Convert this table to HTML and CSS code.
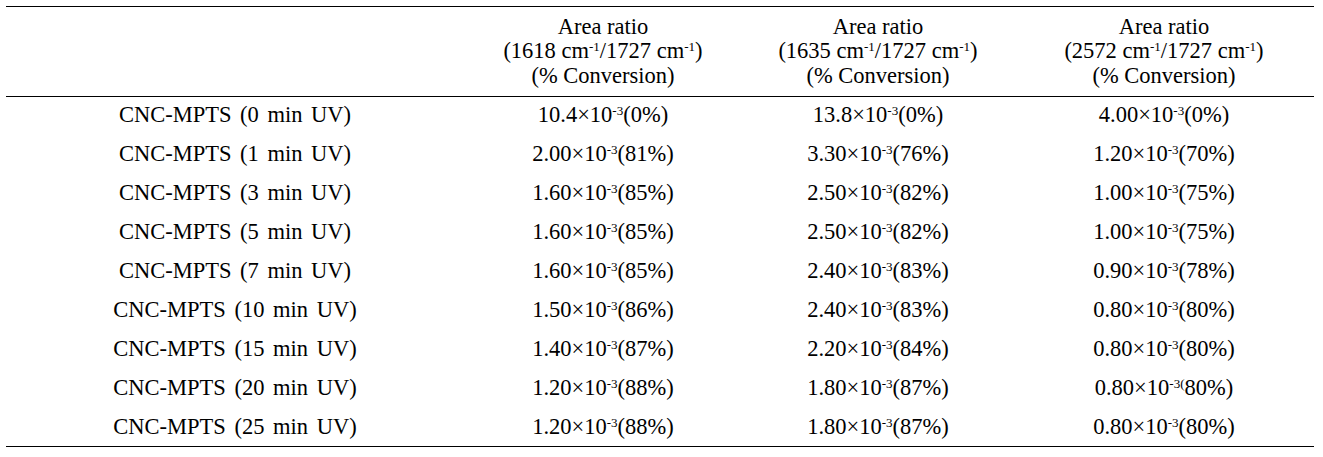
FILE: index.html
```html
<!DOCTYPE html>
<html lang="en">
<head>
<meta charset="utf-8">
<title>Area ratio table</title>
<link rel="stylesheet" href="styles.css">
</head>
<body>
<table class="data">
  <colgroup>
    <col class="c1"><col class="c2"><col class="c3"><col class="c4">
  </colgroup>
  <thead>
    <tr>
      <th></th>
      <th>Area ratio<br>(1618 cm<sup>-1</sup>/1727 cm<sup>-1</sup>)<br>(% Conversion)</th>
      <th>Area ratio<br>(1635 cm<sup>-1</sup>/1727 cm<sup>-1</sup>)<br>(% Conversion)</th>
      <th>Area ratio<br>(2572 cm<sup>-1</sup>/1727 cm<sup>-1</sup>)<br>(% Conversion)</th>
    </tr>
  </thead>
  <tbody>
    <tr><td class="lbl">CNC-MPTS (0 min UV)</td><td>10.4×10<sup>-3</sup>(0%)</td><td>13.8×10<sup>-3</sup>(0%)</td><td>4.00×10<sup>-3</sup>(0%)</td></tr>
    <tr><td class="lbl">CNC-MPTS (1 min UV)</td><td>2.00×10<sup>-3</sup>(81%)</td><td>3.30×10<sup>-3</sup>(76%)</td><td>1.20×10<sup>-3</sup>(70%)</td></tr>
    <tr><td class="lbl">CNC-MPTS (3 min UV)</td><td>1.60×10<sup>-3</sup>(85%)</td><td>2.50×10<sup>-3</sup>(82%)</td><td>1.00×10<sup>-3</sup>(75%)</td></tr>
    <tr><td class="lbl">CNC-MPTS (5 min UV)</td><td>1.60×10<sup>-3</sup>(85%)</td><td>2.50×10<sup>-3</sup>(82%)</td><td>1.00×10<sup>-3</sup>(75%)</td></tr>
    <tr><td class="lbl">CNC-MPTS (7 min UV)</td><td>1.60×10<sup>-3</sup>(85%)</td><td>2.40×10<sup>-3</sup>(83%)</td><td>0.90×10<sup>-3</sup>(78%)</td></tr>
    <tr><td class="lbl">CNC-MPTS (10 min UV)</td><td>1.50×10<sup>-3</sup>(86%)</td><td>2.40×10<sup>-3</sup>(83%)</td><td>0.80×10<sup>-3</sup>(80%)</td></tr>
    <tr><td class="lbl">CNC-MPTS (15 min UV)</td><td>1.40×10<sup>-3</sup>(87%)</td><td>2.20×10<sup>-3</sup>(84%)</td><td>0.80×10<sup>-3</sup>(80%)</td></tr>
    <tr><td class="lbl">CNC-MPTS (20 min UV)</td><td>1.20×10<sup>-3</sup>(88%)</td><td>1.80×10<sup>-3</sup>(87%)</td><td>0.80×10<sup>-3(</sup>80%)</td></tr>
    <tr><td class="lbl">CNC-MPTS (25 min UV)</td><td>1.20×10<sup>-3</sup>(88%)</td><td>1.80×10<sup>-3</sup>(87%)</td><td>0.80×10<sup>-3</sup>(80%)</td></tr>
  </tbody>
</table>
</body>
</html>
```
FILE: styles.css
```css
html, body {
  margin: 0;
  padding: 0;
  background: #fff;
}

body {
  font-family: "Liberation Serif", "Times New Roman", serif;
  font-size: 22.5px;
  color: #000;
}

.data {
  margin: 6px 0 0 6px;
  width: 1308px;
  border-collapse: collapse;
  table-layout: fixed;
  border-top: 1px solid #000;
  border-bottom: 1px solid #000;
}

.c1 { width: 458px; }
.c2 { width: 278px; }
.c3 { width: 272px; }
.c4 { width: 300px; }

.data th {
  font-weight: normal;
  text-align: center;
  vertical-align: middle;
  height: 89px;
  padding: 0;
  line-height: 24.5px;
  border-bottom: 1px solid #000;
}

.data td {
  text-align: center;
  vertical-align: middle;
  height: 35px;
  padding: 0 0 4px 0;
  line-height: 26px;
  white-space: nowrap;
}

.data tbody tr:last-child td {
  padding-bottom: 2px;
}

.data td.lbl {
  word-spacing: 3px;
}

sup {
  font-size: 0.58em;
  line-height: 0;
  vertical-align: 0.5em;
}
```
